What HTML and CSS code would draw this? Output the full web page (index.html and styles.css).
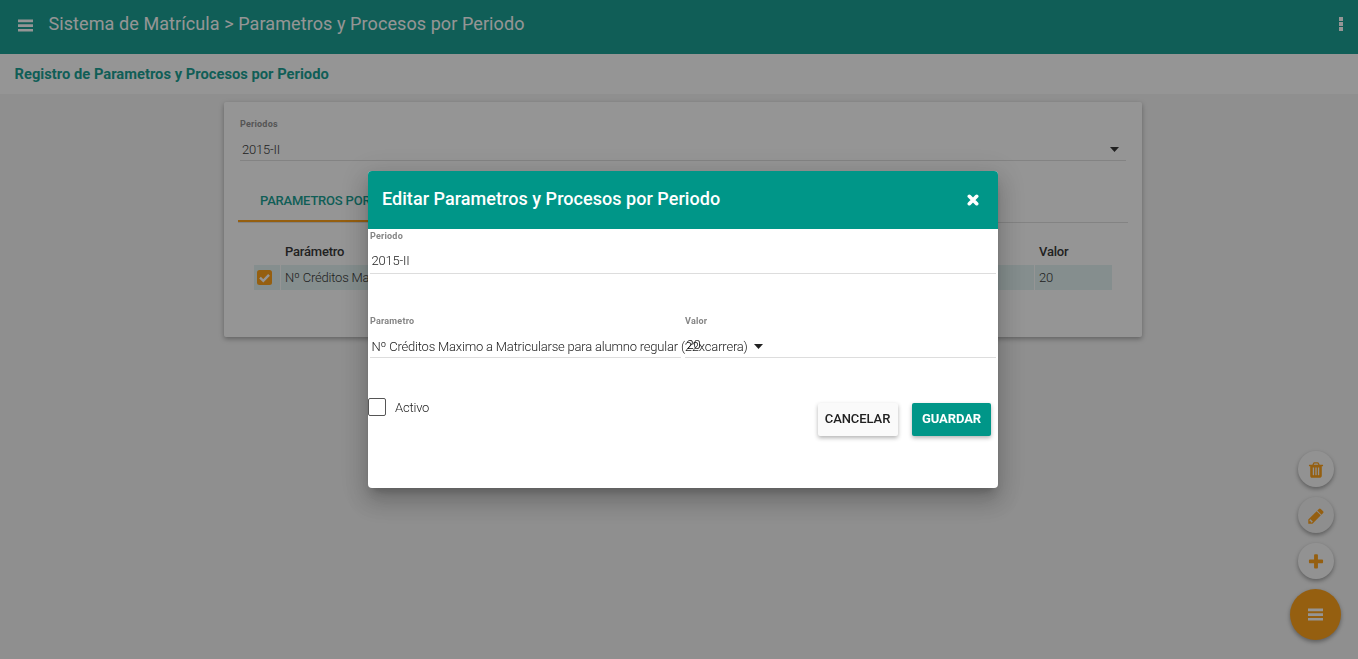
FILE: index.html
```html
<!DOCTYPE html>
<html lang="es">
<head>
<meta charset="utf-8">
<title>Sistema de Matrícula</title>
<link rel="stylesheet" href="styles.css">
</head>
<body>
<div class="app">
  <header class="topbar">
    <svg class="menu-icon" viewBox="0 0 15 13"><path d="M0 .6h15v2.600H0zM0 5.300h15v2.600H0zM0 10h15v2.600H0z"/></svg>
    <h1 class="topbar-title">Sistema de Matrícula &gt; Parametros y Procesos por Periodo</h1>
    <svg class="more-icon" viewBox="0 0 4 14"><path d="M0 0h4v4H0zM0 5h4v4H0zM0 10h4v4H0z"/></svg>
  </header>
  <h2 class="subheader">Registro de Parametros y Procesos por Periodo</h2>
  <main class="card">
    <div class="label">Periodos</div>
    <div class="field period-field"><span>2015-II</span><svg class="caret" viewBox="0 0 9 5"><path d="M0 0h9L4.500 5z"/></svg></div>
    <div class="tabs"><div class="tab">PARAMETROS POR PERIODO</div></div>
    <div class="table">
      <div class="row head"><span></span><span class="cell">Parámetro</span><span class="cell">Valor</span></div>
      <div class="row body">
        <span class="check-cell"><svg class="check" viewBox="0 0 15 15"><rect width="15" height="15" rx="2.5" fill="#ff9800"/><path d="M3 7.600l3.300 3.200L12 4.800" fill="none" stroke="#fff" stroke-width="2.400"/></svg></span>
        <span class="cell">Nº Créditos Maximo a Matricularse para alumno regular</span>
        <span class="cell">20</span>
      </div>
    </div>
  </main>
</div>
<nav class="fabs">
  <span class="fab"><svg class="fab-icon" viewBox="0 0 1792 1792"><path d="M704 1376v-704q0-14-9-23t-23-9h-64q-14 0-23 9t-9 23v704q0 14 9 23t23 9h64q14 0 23-9t9-23zm256 0v-704q0-14-9-23t-23-9h-64q-14 0-23 9t-9 23v704q0 14 9 23t23 9h64q14 0 23-9t9-23zm256 0v-704q0-14-9-23t-23-9h-64q-14 0-23 9t-9 23v704q0 14 9 23t23 9h64q14 0 23-9t9-23zm-544-992h448l-48-117q-7-9-17-11h-317q-10 2-17 11zm928 32v64q0 14-9 23t-23 9h-96v948q0 83-47 143.500t-113 60.500h-832q-66 0-113-58.500t-47-141.500v-952h-96q-14 0-23-9t-9-23v-64q0-14 9-23t23-9h309l70-167q15-37 54-63t79-26h320q40 0 79 26t54 63l70 167h309q14 0 23 9t9 23z"/></svg></span>
  <span class="fab fab-edit"><svg class="fab-icon" viewBox="0 0 1792 1792"><path d="M491 1536l91-91-235-235-91 91v107h128v128h107zm469-1120l416 416-832 832h-416v-416zm683 96q0 53-37 90l-166 166-416-416 166-165q36-38 90-38 53 0 91 38l235 234q37 39 37 91z"/></svg></span>
  <span class="fab"><svg class="fab-icon" viewBox="0 0 1792 1792"><path d="M1600 736v192q0 40-28 68t-68 28h-416v416q0 40-28 68t-68 28h-192q-40 0-68-28t-28-68v-416h-416q-40 0-68-28t-28-68v-192q0-40 28-68t68-28h416v-416q0-40 28-68t68-28h192q40 0 68 28t28 68v416h416q40 0 68 28t28 68z"/></svg></span>
  <span class="fab fab-main"><svg class="menu-icon" viewBox="0 0 15 13"><path d="M0 .6h15v2.600H0zM0 5.300h15v2.600H0zM0 10h15v2.600H0z"/></svg></span>
</nav>
<div class="backdrop">
  <section class="dialog">
    <div class="dialog-head">
      <h2 class="dialog-title">Editar Parametros y Procesos por Periodo</h2>
      <svg class="close" viewBox="0 0 12 12"><path d="M2.300 2.300l7.400 7.400M9.700 2.300L2.300 9.700"/></svg>
    </div>
    <div class="dialog-body">
      <div class="group"><div class="label">Periodo</div><div class="field"><span>2015-II</span></div></div>
      <div class="pair">
        <div class="group"><div class="label">Parametro</div><div class="field param"><span>Nº Créditos Maximo a Matricularse para alumno regular (22xcarrera)</span><svg class="caret" viewBox="0 0 9 5"><path d="M0 0h9L4.500 5z"/></svg></div></div>
        <div class="group"><div class="label">Valor</div><div class="field value"><span>20</span></div></div>
      </div>
      <div class="actions">
        <div class="active"><span class="box"></span><span class="active-text">Activo</span></div>
        <div class="btn cancel">CANCELAR</div>
        <div class="btn save">GUARDAR</div>
      </div>
    </div>
  </section>
</div>
</body>
</html>
```
FILE: styles.css
```css
* { box-sizing: border-box; }
body { margin: 0; height: 659px; overflow: hidden; background: #f3f3f3; color: #212121; font: 300 13px/20px Roboto, sans-serif; letter-spacing: -.2px; }
h1, h2 { margin: 0; }
svg { flex: none; }
.topbar { display: flex; height: 54px; padding: 0 15px 6px 18px; align-items: center; background: #009688; color: #fff; }
.menu-icon { width: 15px; height: 13px; margin-top: 2px; fill: #fff; }
.fab .menu-icon { margin-top: 0; }
.topbar-title { flex: 1; margin-left: 15.500px; font-size: 18px; font-weight: 400; letter-spacing: .085px; }
.more-icon { width: 4px; height: 14px; fill: #fff; }
.subheader { height: 40px; padding-left: 14.500px; background: #fff; color: #009688; font-size: 14.700px; font-weight: 700; line-height: 41px; letter-spacing: .025px; }
.card { width: 918px; height: 235px; margin: 8px 0 0 224px; padding: 15px 14px 0 16px; border-radius: 2px; background: #fff; box-shadow: 0 2px 5px rgba(0,0,0,.35); }
.label { height: 13px; color: #858585; font-size: 9px; font-weight: 700; line-height: 14px; letter-spacing: .2px; }
.field { display: flex; align-items: center; padding: 0 2px; border-bottom: 1px solid #ddd; white-space: nowrap; }
.period-field { height: 31px; width: 886px; padding: 9px 7px 0 2px; justify-content: space-between; }
.caret { width: 9px; height: 5px; fill: #212121; }
.tabs { display: flex; height: 41px; width: 890px; margin: 21px 0 0 -2px; border-bottom: 1px solid #ddd; }
.tab { width: 210px; height: 40px; padding-left: 22px; border-bottom: 2px solid #ff9800; color: #009688; font-weight: 500; line-height: 38px; white-space: nowrap; }
.table { width: 858px; margin: 16px 0 0 14px; }
.row { display: grid; grid-template-columns: 26px 753px 77px; gap: 1px; height: 26px; line-height: 26px; }
.head { font-weight: 500; }
.body { height: 25px; line-height: 25px; }
.body > span { background: #e0f2f1; }
.cell { padding-left: 4px; overflow: hidden; white-space: nowrap; }
.check-cell { display: flex; padding: 0 0 1px 3px; align-items: center; }
.check { width: 15px; height: 15px; }
.fabs { position: fixed; right: 17px; bottom: 19px; display: flex; flex-direction: column; align-items: center; gap: 10px; }
.fab { display: flex; width: 36px; height: 36px; align-items: center; justify-content: center; border-radius: 50%; background: #fafafa; box-shadow: 0 2px 4px rgba(0,0,0,.4); }
.fab-edit { background: #f1f1f1; }
.fab-icon { width: 18px; height: 18px; margin-top: 2px; fill: #ff9800; }
.fab-main { width: 51px; height: 51px; background: #ff9800; }
.backdrop { position: fixed; inset: 0; background: rgba(33,33,33,.48); }
.dialog { width: 630px; height: 317px; margin: 171px 0 0 368px; border-radius: 4px; background: #fff; box-shadow: 0 7px 9px -4px rgba(0,0,0,.2), 0 14px 21px 2px rgba(0,0,0,.14), 0 5px 26px 4px rgba(0,0,0,.12); }
.dialog-head { display: flex; height: 58px; padding: 0 19px 0 14px; justify-content: space-between; align-items: center; border-radius: 4px 4px 0 0; background: #009688; color: #fff; }
.dialog-title { padding-bottom: 3px; font-size: 18px; font-weight: 500; letter-spacing: .04px; }
.close { width: 12px; height: 12px; stroke: #fff; stroke-width: 3.600; stroke-linecap: round; }
.dialog-body { padding: 0 2px; }
.dialog-body .field { height: 32px; padding-top: 6px; padding-left: 1.500px; }
.dialog-body .caret { margin-left: 6px; }
.pair { display: grid; grid-template-columns: 311px 311px; gap: 4px; margin-top: 40px; }
.dialog-body .pair .field { height: 31px; }
.dialog-body .pair .param { padding-top: 9px; }
.group { min-width: 0; }
.value { color: #000; }
.actions { display: flex; margin-top: 45px; padding-right: 5px; }
.active { display: flex; flex: 1; height: 18px; margin: -5px 0 0 -2px; align-items: center; gap: 9px; }
.active-text { padding-top: 2px; }
.box { width: 18px; height: 18px; border: 1px solid #555; border-radius: 2px; }
.btn { height: 33px; width: 79px; border-radius: 2px; text-align: center; line-height: 32px; font-size: 13px; font-weight: 500; letter-spacing: -.08px; box-shadow: 0 2px 4px rgba(0,0,0,.3); }
.cancel { width: 80px; margin-right: 14.500px; background: #fafafa; }
.save { background: #009688; color: #fff; font-weight: 700; }
```
